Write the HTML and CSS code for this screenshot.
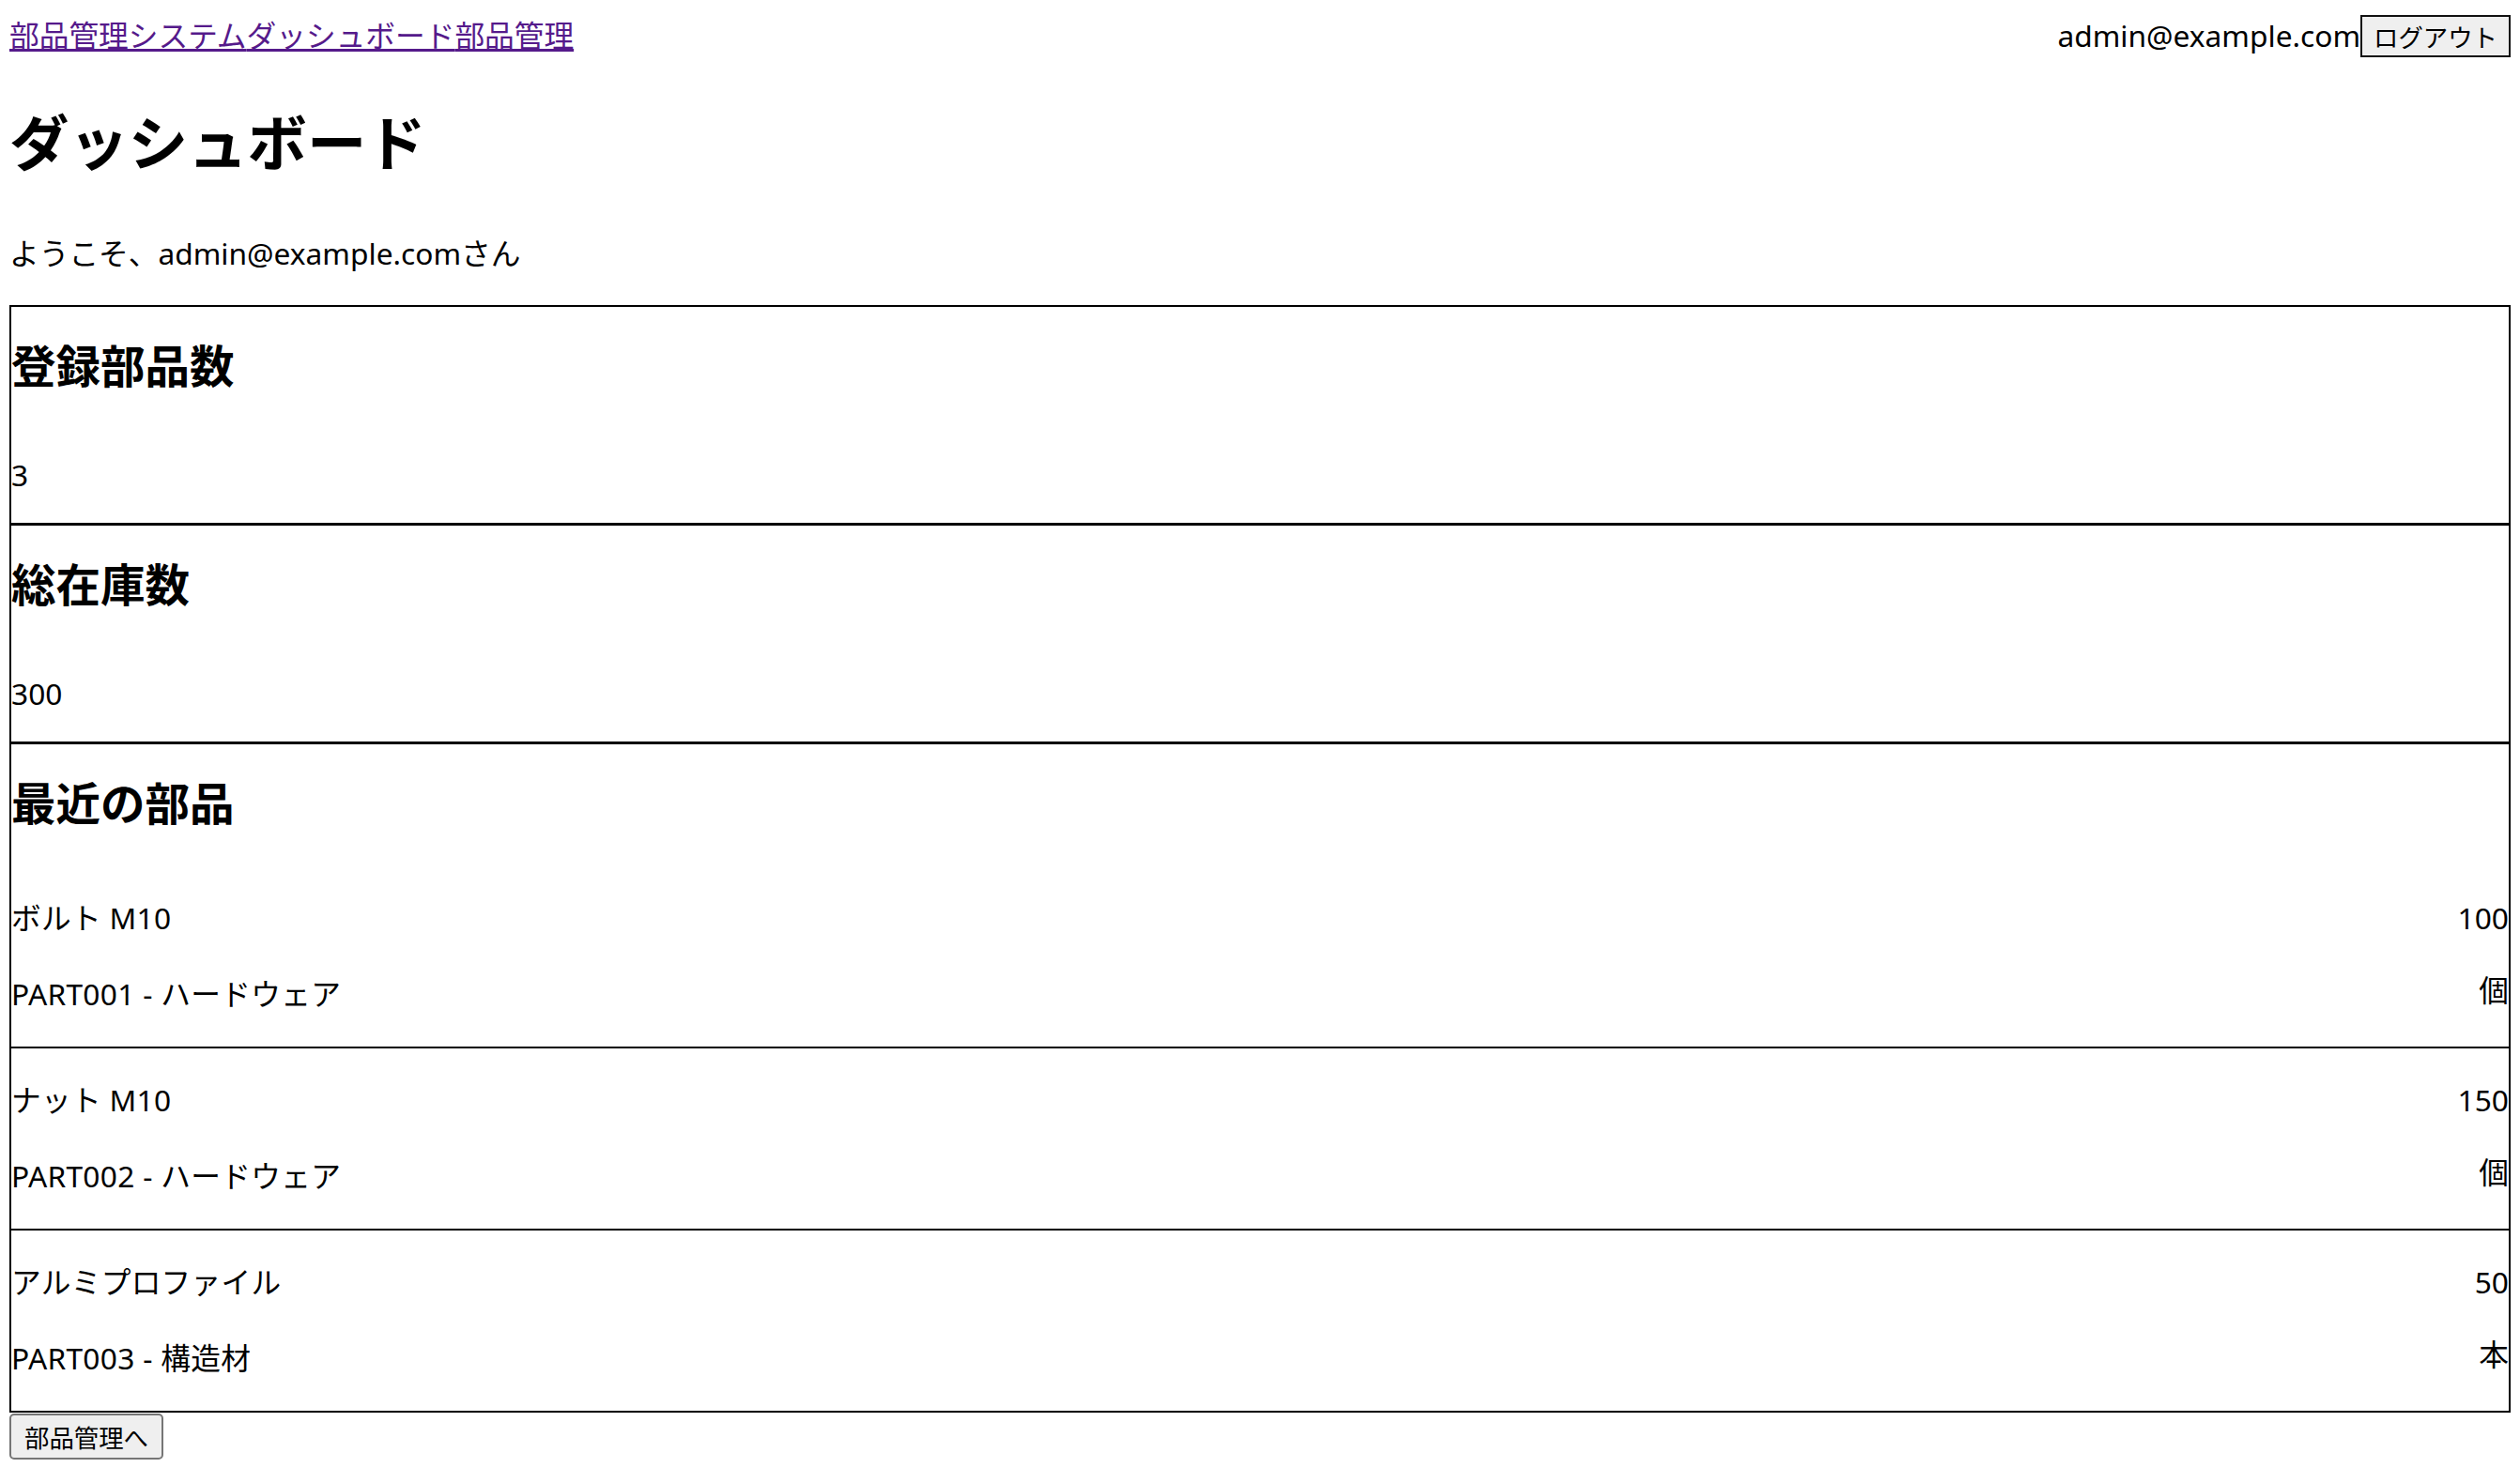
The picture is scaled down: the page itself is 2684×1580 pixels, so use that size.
FILE: index.html
```html
<!DOCTYPE html>
<html lang="ja">
<head>
<meta charset="utf-8">
<title>ダッシュボード - 部品管理システム</title>
<link rel="stylesheet" href="styles.css">
</head>
<body>
<header class="topbar">
  <nav class="brand-nav"><a href="#" class="nav-link">部品管理システム</a><a href="#" class="nav-link">ダッシュボード</a><a href="#" class="nav-link">部品管理</a></nav>
  <div class="user-area"><span class="user-email">admin@example.com</span><button class="btn-logout" type="button">ログアウト</button></div>
</header>
<main class="content">
  <h1 class="page-title">ダッシュボード</h1>
  <p class="welcome">ようこそ、admin@example.comさん</p>

  <section class="card">
    <h2 class="card-title">登録部品数</h2>
    <p class="stat">3</p>
  </section>

  <section class="card">
    <h2 class="card-title">総在庫数</h2>
    <p class="stat">300</p>
  </section>

  <section class="card">
    <h2 class="card-title">最近の部品</h2>
    <ul class="part-list">
      <li class="part-row">
        <div class="part-info"><p class="line">ボルト M10</p><p class="line second">PART001 - ハードウェア</p></div>
        <div class="part-qty"><p class="line">100</p><p class="line second unit">個</p></div>
      </li>
      <li class="part-row">
        <div class="part-info"><p class="line">ナット M10</p><p class="line second">PART002 - ハードウェア</p></div>
        <div class="part-qty"><p class="line">150</p><p class="line second unit">個</p></div>
      </li>
      <li class="part-row">
        <div class="part-info"><p class="line">アルミプロファイル</p><p class="line second">PART003 - 構造材</p></div>
        <div class="part-qty"><p class="line">50</p><p class="line second unit">本</p></div>
      </li>
    </ul>
  </section>

  <button class="btn-parts" type="button">部品管理へ</button>
</main>
</body>
</html>
```

FILE: styles.css
```css
html, body {
  margin: 0;
  background: #ffffff;
}

body {
  padding: 13px 10px 0;
  font-family: "Noto Sans", "Noto Sans CJK JP", sans-serif;
  font-size: 31.7px;
  line-height: 49px;
  color: #000000;
}

.topbar {
  display: flex;
  justify-content: space-between;
  align-items: center;
  height: 49px;
}

.nav-link {
  color: #551a8b;
  text-decoration: underline;
  text-decoration-thickness: 3px;
}

.user-area {
  display: flex;
  align-items: center;
}

.btn-logout {
  box-sizing: border-box;
  height: 45px;
  margin: 2px 0 0;
  padding: 2px 12px;
  font-family: "Noto Sans CJK JP", sans-serif;
  font-size: 26.4px;
  line-height: 37px;
  color: #000000;
  background: #efefef;
  border: 2px solid #111111;
  border-radius: 0;
}

.page-title {
  margin: 40.5px 0 45px;
  font-size: 63.4px;
  line-height: 97px;
  font-weight: 700;
}

.welcome {
  margin: 0 0 31.5px;
}

.card {
  border: 2px solid #000000;
}

.card + .card {
  border-top-width: 1px;
}

.card-title {
  margin: 26.5px 0 0;
  font-size: 47.5px;
  line-height: 72px;
  font-weight: 700;
}

.stat {
  margin: 55.5px 0 27px;
}

.part-list {
  list-style: none;
  margin: 31px 0 0;
  padding: 0;
}

.part-row {
  display: flex;
  justify-content: space-between;
  padding: 30px 0 32px;
  border-bottom: 2px solid #000000;
}

.part-row:last-child {
  border-bottom: none;
  padding-bottom: 32px;
}

.part-info {
  letter-spacing: 0.3px;
}

.part-qty {
  text-align: right;
}

.line {
  margin: 0;
}

.line.second {
  margin-top: 32px;
}

.line.unit {
  margin-top: 28px;
}

.btn-parts {
  display: block;
  box-sizing: border-box;
  height: 49px;
  margin: 1.5px 0 0;
  padding: 0 14px;
  font-family: "Noto Sans CJK JP", sans-serif;
  font-size: 26.4px;
  line-height: 45px;
  color: #000000;
  background: #efefef;
  border: 2px solid #767676;
  border-radius: 5px;
}
```
